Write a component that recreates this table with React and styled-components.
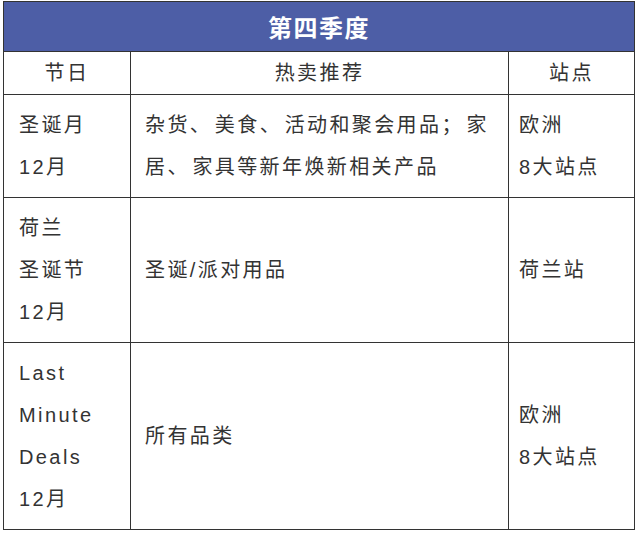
import React from "react";
import styled, { createGlobalStyle } from "styled-components";

const GlobalStyle = createGlobalStyle`
  html, body {
    margin: 0;
    padding: 0;
    background: #ffffff;
  }
  body {
    font-family: "Liberation Sans", "Noto Sans CJK SC", Arial, sans-serif;
    color: #333333;
  }
`;

const Page = styled.div`
  padding: 1px 3px 0 3px;
  width: 631px;
`;

const Table = styled.table`
  width: 631px;
  border-collapse: collapse;
  table-layout: fixed;
  border: 1px solid #333333;
`;

const TitleCell = styled.th`
  height: 49px;
  padding: 0;
  background: #4d5ea6;
  color: #ffffff;
  font-size: 24px;
  font-weight: bold;
  letter-spacing: 1.5px;
  text-align: center;
  border: 1px solid #333333;
`;

const HeadCell = styled.th`
  padding: 0;
  line-height: 42px;
  font-size: 20px;
  font-weight: normal;
  letter-spacing: 2.4px;
  text-align: center;
  color: #333333;
  border: 1px solid #333333;
`;

const Cell = styled.td`
  padding: 9px 15px 9px ${(p) => p.$left || 15}px;
  line-height: 42px;
  font-size: 20px;
  letter-spacing: 2.4px;
  text-align: left;
  vertical-align: middle;
  color: #333333;
  border: 1px solid #333333;
  word-break: break-all;
`;

// full-width punctuation is set a little wider in the source
const Punct = styled.span`
  letter-spacing: 5px;
`;

const rows = [
  {
    festival: ["圣诞月", "12月"],
    items: "杂货、美食、活动和聚会用品；家居、家具等新年焕新相关产品",
    site: ["欧洲", "8大站点"],
  },
  {
    festival: ["荷兰", "圣诞节", "12月"],
    items: "圣诞/派对用品",
    site: ["荷兰站"],
  },
  {
    festival: ["Last", "Minute", "Deals", "12月"],
    items: "所有品类",
    site: ["欧洲", "8大站点"],
  },
];

const Lines = ({ lines }) =>
  lines.map((line, i) => <div key={i}>{line}</div>);

const Items = ({ text }) =>
  text
    .split(/([、；])/)
    .map((part, i) =>
      part === "、" || part === "；" ? <Punct key={i}>{part}</Punct> : part
    );

export default function App() {
  return (
    <>
      <GlobalStyle />
      <Page>
        <Table>
          <colgroup>
            <col style={{ width: 127 }} />
            <col style={{ width: 378 }} />
            <col style={{ width: 126 }} />
          </colgroup>
          <thead>
            <tr>
              <TitleCell colSpan={3}>第四季度</TitleCell>
            </tr>
            <tr>
              <HeadCell>节日</HeadCell>
              <HeadCell>热卖推荐</HeadCell>
              <HeadCell>站点</HeadCell>
            </tr>
          </thead>
          <tbody>
            {rows.map((row, i) => (
              <tr key={i}>
                <Cell $left={15}>
                  <Lines lines={row.festival} />
                </Cell>
                <Cell $left={14}>
                  <Items text={row.items} />
                </Cell>
                <Cell $left={10}>
                  <Lines lines={row.site} />
                </Cell>
              </tr>
            ))}
          </tbody>
        </Table>
      </Page>
    </>
  );
}
